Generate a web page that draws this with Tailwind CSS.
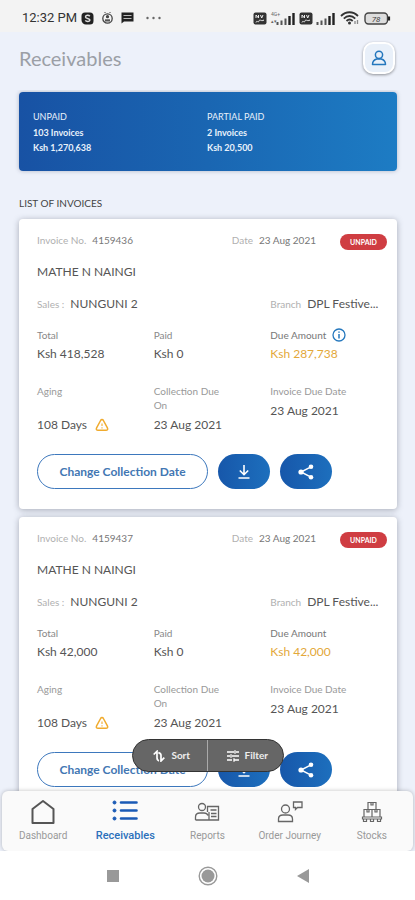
<!DOCTYPE html>
<html lang="en">
<head>
<meta charset="utf-8">
<meta name="viewport" content="width=device-width, initial-scale=1">
<title>Receivables</title>
<script src="https://cdn.jsdelivr.net/npm/@tailwindcss/browser@4"></script>
</head>
<body class="bg-[#edf1fa] font-['Lato',sans-serif] text-[#555]">
<svg class="hidden" aria-hidden="true">
  <symbol id="warn" viewBox="0 0 14 14"><path d="M7 1.600c.7 0 1.100.4 1.400.9l4 7.300c.8 1.600 0 2.500-1.400 2.500H3c-1.400 0-2.200-.9-1.400-2.500l4-7.300c.3-.5.7-.9 1.400-.9z" fill="none" stroke="#f0ab2e" stroke-width="1.500"/><path d="M7 5.500v2.500M7 9.300v1.100" stroke="#f0ab2e" stroke-width="1.100"/></symbol>
  <symbol id="download" viewBox="0 0 16 16"><path d="M8 1v9.500M3.800 6.500L8 10.700l4.200-4.200M2.500 14h11" fill="none" stroke="#fff" stroke-width="1.600"/></symbol>
  <symbol id="share" viewBox="0 0 16 16"><path d="M13 2.800L3 8l10 5.200" fill="none" stroke="#fff" stroke-width="1.500"/><circle cx="13" cy="2.800" r="2.300" fill="#fff"/><circle cx="3" cy="8" r="2.600" fill="#fff"/><circle cx="13" cy="13.200" r="2.300" fill="#fff"/></symbol>
  <symbol id="sim" viewBox="0 0 14 13"><rect x=".5" y=".5" width="13" height="12" rx="2" fill="#333"/><path d="M3 6V3l2.500 3V3M7.500 3l1.200 3L10 3M3 10.500c1-3 2 1 3-1.500s2 1 5-1" fill="none" stroke="#eee" stroke-width="1"/></symbol>
  <symbol id="signal" viewBox="0 0 20 13"><path d="M1.500 10v3M5.500 8.500V13M9.500 6.500V13" stroke="#555" stroke-width="2"/><path d="M13.500 4v9M17.500 1v12" stroke="#222" stroke-width="2.400"/></symbol>
</svg>
<div class="flex h-screen flex-col">
  <div class="flex h-8 shrink-0 items-center bg-[#f3f3f3] pt-1 pr-6 pl-[22px] font-['Roboto',sans-serif] text-[13px] text-[#333]">
    <span class="whitespace-nowrap">12:32 PM</span>
    <svg class="ml-1 h-[13px] w-[13px]" viewBox="0 0 13 13"><path d="M4 .5h5a3.500 3.500 0 0 1 3.500 3.500v5A3.500 3.500 0 0 1 9 12.500H5A4.500 4.500 0 0 1 .5 8V4A3.500 3.500 0 0 1 4 .5z" fill="#222"/><path d="M8.800 4.300C7.800 2.900 4.500 3 4.500 4.900c0 1.900 4.400 1.200 4.400 3.100 0 1.900-3.500 2-4.600.4" fill="none" stroke="#ddd" stroke-width="1.500"/></svg>
    <svg class="ml-2 h-[13px] w-[11px]" viewBox="0 0 11 13"><circle cx="5.500" cy="6.500" r="4.700" fill="none" stroke="#444" stroke-width="1.300"/><circle cx="5.500" cy="4.700" r="1.600" fill="#444"/><path d="M3 9.500V7.300h5v2.200z" fill="#555"/><path d="M3.500 1L2.500 0M7.500 1l1-1" stroke="#444"/></svg>
    <svg class="ml-2 h-[12px] w-[13px]" viewBox="0 0 13 12"><path d="M.5.5h12v9H3l-2.500 2z" fill="#222"/><path d="M2.500 3.500h8M2.500 6.500h8" stroke="#bbb" stroke-width="1.200"/></svg>
    <svg class="ml-3 h-1 w-[15px]" viewBox="0 0 15 4"><g fill="#666"><circle cx="1.500" cy="2" r="1.200"/><circle cx="7.500" cy="2" r="1.200"/><circle cx="13.500" cy="2" r="1.200"/></g></svg>
    <div class="ml-auto flex items-center">
      <svg class="h-[13px] w-[14px]"><use href="#sim"/></svg>
      <span class="ml-1 flex h-3 flex-col justify-between text-[5px] leading-[5px] text-[#666]"><span>4G+</span><span>▴▾</span></span>
      <svg class="-ml-1 h-[13px] w-5"><use href="#signal"/></svg>
      <svg class="ml-[3px] h-[13px] w-[14px]"><use href="#sim"/></svg>
      <svg class="ml-[3px] h-[13px] w-5"><use href="#signal"/></svg>
      <svg class="ml-1 h-[14px] w-5" viewBox="0 0 20 14"><path d="M1 5c5-5 12-5 17 0" fill="none" stroke="#333" stroke-width="1.800"/><path d="M3.800 7.600c3.500-3.500 8-3.500 11.400 0M6.500 10c2-2 4.200-2 6.200 0" fill="none" stroke="#333" stroke-width="1.800"/><circle cx="9.500" cy="12" r="1.500" fill="#333"/><path d="M15 13v-3M17.500 9v4" stroke="#888" stroke-width="1.300"/></svg>
      <svg class="ml-1 h-[13px] w-[27px]" viewBox="0 0 27 13"><rect x="1" y="1" width="22.500" height="11" rx="3.500" fill="#ddd" stroke="#444" stroke-width="1.400"/><path d="M25 4.500v4" stroke="#222" stroke-width="2.200"/><text x="12" y="9.500" font-size="8" text-anchor="middle" fill="#444" font-style="italic">78</text></svg>
    </div>
  </div>

  <header class="flex shrink-0 items-center justify-between pt-[10px] pr-5 pb-4 pl-[19px]">
    <h1 class="text-xl leading-6 text-[#9b9fa6]">Receivables</h1>
    <button aria-label="Profile" class="flex h-8 w-8 items-center justify-center rounded-[10px] border-2 border-white bg-[#e9f0f9] shadow-[0_1px_3px_rgba(0,0,0,0.4)]">
      <svg class="h-4 w-4" viewBox="0 0 16 16" fill="none" stroke="#2477bd" stroke-width="1.500"><circle cx="8" cy="4.800" r="3.600"/><path d="M1.500 14.500c0-3.500 2-5 4.300-5.600h4.400c2.300.6 4.300 2.100 4.300 5.600z" stroke-linejoin="round"/></svg>
    </button>
  </header>

  <main class="relative min-h-0 flex-1 overflow-y-auto px-[18px] pt-[2px] [scrollbar-width:none]">
    <section class="ml-px grid grid-cols-[174px_1fr] rounded bg-linear-to-r from-[#1852a4] via-[#1a66b2] to-[#1d7cc4] px-[14px] pt-4 pb-4 text-[9px] leading-[15px] font-bold text-[#e8f1fb] shadow-[0_0_4px_rgba(60,70,100,0.35)]">
      <div class="flex flex-col"><span class="leading-[17px] font-normal">UNPAID</span><span>103 Invoices</span><span>Ksh 1,270,638</span></div>
      <div class="flex flex-col"><span class="leading-[17px] font-normal">PARTIAL PAID</span><span>2 Invoices</span><span>Ksh 20,500</span></div>
    </section>
    <h2 class="mt-6 mb-2 ml-px text-[10px] leading-4 text-[#444]">LIST OF INVOICES</h2>

    <div class="ml-px flex flex-col gap-2">
      <article class="rounded bg-white pt-3 pr-[10px] pb-5 pl-[18px] shadow-[0_1px_6px_rgba(60,65,80,0.4)]">
        <div class="flex text-[10px] leading-[18px] text-[#777]">
          <span class="flex-1"><span class="text-[#b0b0b0]">Invoice No.</span><span class="ml-[6px]">4159436</span></span>
          <span class="mr-6"><span class="text-[#b0b0b0]">Date</span><span class="ml-[6px]">23 Aug 2021</span></span>
          <span class="mt-[3px] h-4 w-[47px] rounded-full bg-[#cf3d42] text-center text-[7px] leading-4 font-bold text-white">UNPAID</span>
        </div>
        <h3 class="mt-3 text-xs leading-5">MATHE N NAINGI</h3>
        <div class="mt-3 grid grid-cols-3 text-xs leading-5">
          <span class="col-span-2"><span class="text-[10px] text-[#b0b0b0]">Sales :</span><span class="ml-[6px]">NUNGUNI 2</span></span>
          <span class="whitespace-nowrap"><span class="text-[10px] text-[#b0b0b0]">Branch</span><span class="ml-[6px]">DPL Festive...</span></span>
        </div>
        <dl class="mt-3 grid grid-cols-3 text-xs">
          <div><dt class="text-[10px] leading-[18px] text-[#888]">Total</dt><dd class="leading-5">Ksh 418,528</dd></div>
          <div><dt class="text-[10px] leading-[18px] text-[#888]">Paid</dt><dd class="leading-5">Ksh 0</dd></div>
          <div><dt class="flex items-center text-[10px] leading-[18px] text-[#777]">Due Amount<svg class="ml-[6px] h-[14px] w-[14px]" viewBox="0 0 14 14" fill="none" stroke="#2477bd"><circle cx="7" cy="7" r="6" stroke-width="1.300"/><path d="M7 6v4.500M7 3.500v1.300" stroke-width="1.500"/></svg></dt><dd class="leading-5 text-[#e3a83a]">Ksh 287,738</dd></div>
        </dl>
        <dl class="mt-5 grid grid-cols-3 text-xs">
          <div class="flex flex-col justify-between"><dt class="text-[10px] leading-[14px] text-[#999]">Aging</dt><dd class="flex items-center leading-[18px]">108 Days<svg class="ml-2 h-[14px] w-[14px]"><use href="#warn"/></svg></dd></div>
          <div><dt class="text-[10px] leading-[14px] text-[#999]">Collection Due<br>On</dt><dd class="mt-1 leading-[18px]">23 Aug 2021</dd></div>
          <div><dt class="text-[10px] leading-[14px] text-[#999]">Invoice Due Date</dt><dd class="mt-1 leading-[18px]">23 Aug 2021</dd></div>
        </dl>
        <div class="mt-5 flex gap-[10px]">
          <button class="h-[35px] w-[171px] rounded-full border border-[#3d78bd] text-xs font-bold text-[#4377b3]">Change Collection Date</button>
          <button aria-label="Download" class="flex h-[35px] w-[52px] items-center justify-center rounded-full bg-linear-to-r from-[#1757aa] to-[#1d6fbd]"><svg class="h-4 w-4"><use href="#download"/></svg></button>
          <button aria-label="Share" class="flex h-[35px] w-[52px] items-center justify-center rounded-full bg-linear-to-r from-[#1757aa] to-[#1d6fbd]"><svg class="h-4 w-4"><use href="#share"/></svg></button>
        </div>
      </article>

      <article class="rounded bg-white pt-3 pr-[10px] pb-5 pl-[18px] shadow-[0_1px_6px_rgba(60,65,80,0.4)]">
        <div class="flex text-[10px] leading-[18px] text-[#777]">
          <span class="flex-1"><span class="text-[#b0b0b0]">Invoice No.</span><span class="ml-[6px]">4159437</span></span>
          <span class="mr-6"><span class="text-[#b0b0b0]">Date</span><span class="ml-[6px]">23 Aug 2021</span></span>
          <span class="mt-[3px] h-4 w-[47px] rounded-full bg-[#cf3d42] text-center text-[7px] leading-4 font-bold text-white">UNPAID</span>
        </div>
        <h3 class="mt-3 text-xs leading-5">MATHE N NAINGI</h3>
        <div class="mt-3 grid grid-cols-3 text-xs leading-5">
          <span class="col-span-2"><span class="text-[10px] text-[#b0b0b0]">Sales :</span><span class="ml-[6px]">NUNGUNI 2</span></span>
          <span class="whitespace-nowrap"><span class="text-[10px] text-[#b0b0b0]">Branch</span><span class="ml-[6px]">DPL Festive...</span></span>
        </div>
        <dl class="mt-3 grid grid-cols-3 text-xs">
          <div><dt class="text-[10px] leading-[18px] text-[#888]">Total</dt><dd class="leading-5">Ksh 42,000</dd></div>
          <div><dt class="text-[10px] leading-[18px] text-[#888]">Paid</dt><dd class="leading-5">Ksh 0</dd></div>
          <div><dt class="text-[10px] leading-[18px] text-[#777]">Due Amount</dt><dd class="leading-5 text-[#e3a83a]">Ksh 42,000</dd></div>
        </dl>
        <dl class="mt-5 grid grid-cols-3 text-xs">
          <div class="flex flex-col justify-between"><dt class="text-[10px] leading-[14px] text-[#999]">Aging</dt><dd class="flex items-center leading-[18px]">108 Days<svg class="ml-2 h-[14px] w-[14px]"><use href="#warn"/></svg></dd></div>
          <div><dt class="text-[10px] leading-[14px] text-[#999]">Collection Due<br>On</dt><dd class="mt-1 leading-[18px]">23 Aug 2021</dd></div>
          <div><dt class="text-[10px] leading-[14px] text-[#999]">Invoice Due Date</dt><dd class="mt-1 leading-[18px]">23 Aug 2021</dd></div>
        </dl>
        <div class="mt-5 flex gap-[10px]">
          <button class="h-[35px] w-[171px] rounded-full border border-[#3d78bd] text-xs font-bold text-[#4377b3]">Change Collection Date</button>
          <button aria-label="Download" class="flex h-[35px] w-[52px] items-center justify-center rounded-full bg-linear-to-r from-[#1757aa] to-[#1d6fbd]"><svg class="h-4 w-4"><use href="#download"/></svg></button>
          <button aria-label="Share" class="flex h-[35px] w-[52px] items-center justify-center rounded-full bg-linear-to-r from-[#1757aa] to-[#1d6fbd]"><svg class="h-4 w-4"><use href="#share"/></svg></button>
        </div>
      </article>
    </div>
  </main>

  <div class="relative shrink-0">
    <div class="absolute -top-[52px] left-1/2 flex h-[33px] w-[152px] -translate-x-1/2 overflow-hidden rounded-full border border-[#333] bg-[#666] text-[10px] font-bold text-[#eee]">
      <button class="flex flex-1 items-center justify-center gap-[6px] border-r border-[#aaa] pl-1"><svg class="h-3 w-3" viewBox="0 0 12 12" fill="none" stroke="#fff" stroke-width="1.700"><path d="M.7 4.500L4 1.300v6.500c0 1.700.7 2.700 2 3M5.300 2.700C6.700 3 8 3.700 8 5.300V11l3.300-3.300"/></svg>Sort</button>
      <button class="flex flex-1 items-center justify-center gap-[6px] pl-1"><svg class="h-3 w-3" viewBox="0 0 12 12" stroke="#fff" stroke-width="1.300"><path d="M0 2h7M9 2h3M0 6h3M5 6h7M0 10h5M7.500 10H12M8 .3v3.400M4 4.300v3.400M7 8.300v3.400"/></svg>Filter</button>
    </div>
    <nav class="mx-[2px] grid h-[60px] grid-cols-5 rounded-md bg-[#fafafa] font-['Roboto',sans-serif] text-[10px] text-[#999] shadow-[0_0_4px_rgba(0,0,0,0.25)]">
      <a href="#" class="flex flex-col items-center pt-2"><svg class="h-[26px] w-[26px]" viewBox="0 0 26 26"><path d="M2.500 10L13 2l10.500 8v14h-21z" fill="none" stroke="#555" stroke-width="2" stroke-linejoin="round"/></svg><span class="mt-1 leading-[14px]">Dashboard</span></a>
      <a href="#" class="flex flex-col items-center pt-2 text-[#2c70ba]"><svg class="h-[26px] w-[26px]" viewBox="0 0 26 26" fill="#1a5ab5" stroke="#1a5ab5"><circle cx="2.500" cy="3.500" r="1.500"/><circle cx="2.500" cy="11.500" r="1.500"/><circle cx="2.500" cy="19.500" r="1.500"/><path d="M9 3.500h15.500M9 11.500h15.500M9 19.500h15.500" stroke-width="2.600" stroke-linecap="round"/></svg><span class="mt-1 text-[11px] leading-[14px] font-medium">Receivables</span></a>
      <a href="#" class="flex flex-col items-center pt-2"><svg class="h-[26px] w-[26px]" viewBox="0 0 26 26" fill="none" stroke="#666" stroke-width="1.300"><circle cx="8" cy="8" r="3.500"/><path d="M1.500 21v-3c0-2.500 2-4 4.500-4h4c2 0 3.500 1 4 2.500M1.500 21h23V7.500H13.500V13M15 21v-8M16.500 11h6M17 14.500h5.500M17 17.500h5.500"/></svg><span class="mt-1 leading-[14px]">Reports</span></a>
      <a href="#" class="flex flex-col items-center pt-2"><svg class="h-[26px] w-[26px]" viewBox="0 0 26 26" fill="none" stroke="#666" stroke-width="1.300"><circle cx="8.500" cy="10" r="4"/><path d="M1.500 22.500v-2.500c0-2.500 2-4 4.500-4h5c2.500 0 4.500 1.500 4.500 4v2.500zM16.500 3h8.500v5.500h-4.500L18.500 10.500v-2h-2z"/></svg><span class="mt-1 whitespace-nowrap leading-[14px]">Order Journey</span></a>
      <a href="#" class="flex flex-col items-center pt-2"><svg class="h-[26px] w-[26px]" viewBox="0 0 26 26" fill="none" stroke="#666" stroke-width="1.200"><path d="M9 3.500h8v7H9zM12 3.500v2.500h2V3.500M5 10.500h8v7.500H5zM13 10.500h8v7.500h-8zM8 10.500V13h2v-2.500M16 10.500V13h2v-2.500M3.500 18h19v2h-19zM4.500 20v2.500h3V20M11.500 20v2.500h3V20M18.500 20v2.500h3V20"/></svg><span class="mt-1 leading-[14px]">Stocks</span></a>
    </nav>
    <div class="flex h-[49px] items-center justify-center gap-[78px] bg-white">
      <button aria-label="Recent apps"><svg class="h-[14px] w-[14px]" viewBox="0 0 14 14"><path d="M1 1h12v12H1z" fill="#999"/></svg></button>
      <button aria-label="Home"><svg class="h-5 w-5" viewBox="0 0 20 20"><circle cx="10" cy="10" r="8.800" fill="none" stroke="#999" stroke-width="1.400"/><circle cx="10" cy="10" r="6.500" fill="#999"/></svg></button>
      <button aria-label="Back"><svg class="h-[14px] w-[14px]" viewBox="0 0 14 14"><path d="M13 0v14L1 7z" fill="#999"/></svg></button>
    </div>
  </div>
</div>
</body>
</html>
